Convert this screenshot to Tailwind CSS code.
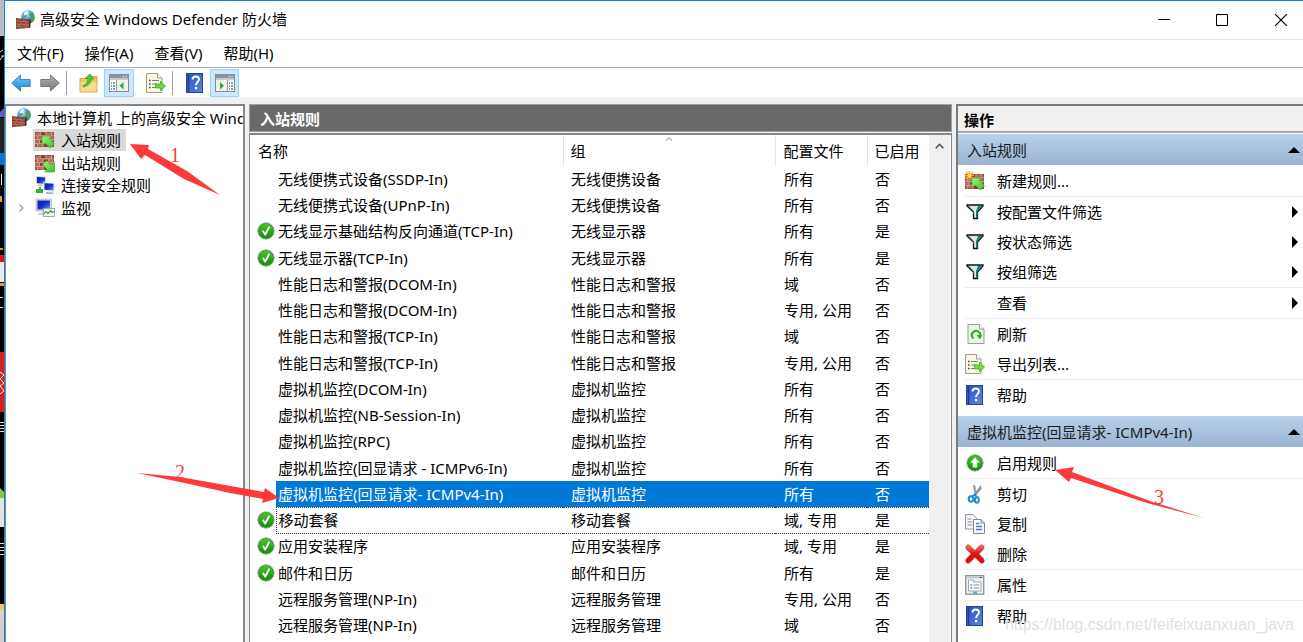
<!DOCTYPE html>
<html lang="zh-CN">
<head>
<meta charset="utf-8">
<meta name="viewport" content="width=device-width, initial-scale=1">
<title>高级安全 Windows Defender 防火墙</title>
<script src="https://cdn.jsdelivr.net/npm/@tailwindcss/browser@4"></script>
</head>
<body class="relative min-h-screen overflow-hidden bg-white font-['Noto_Sans','Noto_Sans_CJK_SC',sans-serif] text-[15px] leading-[22px] text-black">

<svg class="absolute size-0" aria-hidden="true">
  <defs>
    <linearGradient id="gGreen" x1="0" y1="0" x2="0" y2="1"><stop offset="0" stop-color="#4cc42e"/><stop offset="1" stop-color="#128a0c"/></linearGradient>
    <linearGradient id="gBlue" x1="0" y1="0" x2="0" y2="1"><stop offset="0" stop-color="#6fd0ff"/><stop offset="1" stop-color="#1682d8"/></linearGradient>
    <linearGradient id="gGray" x1="0" y1="0" x2="0" y2="1"><stop offset="0" stop-color="#b4b4b4"/><stop offset="1" stop-color="#767676"/></linearGradient>
    <linearGradient id="gBook" x1="0" y1="0" x2="1" y2="1"><stop offset="0" stop-color="#2c50b4"/><stop offset="1" stop-color="#5f86e4"/></linearGradient>
    <linearGradient id="gArrow" x1="0" y1="0" x2="1" y2="1"><stop offset="0" stop-color="#9cf47c"/><stop offset="1" stop-color="#3cc02a"/></linearGradient>
    <linearGradient id="gRed" x1="0" y1="0" x2="0" y2="1"><stop offset="0" stop-color="#f07a78"/><stop offset=".5" stop-color="#e01010"/><stop offset="1" stop-color="#d41414"/></linearGradient>
    <linearGradient id="gScreen" x1="0" y1="0" x2="1" y2="1"><stop offset="0" stop-color="#0a1a9c"/><stop offset=".5" stop-color="#1230d0"/><stop offset="1" stop-color="#6f9cff"/></linearGradient>
    <radialGradient id="gGlobe" cx=".4" cy=".3" r=".8"><stop offset="0" stop-color="#bfeaff"/><stop offset=".5" stop-color="#3f95dc"/><stop offset="1" stop-color="#1a4fa0"/></radialGradient>

    <symbol id="bricks" viewBox="0 0 20 16">
      <rect width="20" height="16" fill="#a04c3c"/>
      <path d="M1 1h4v2H1zM12 1h5v2h-5zM3 5h5v2H3zM15 5h4v2h-4zM0 9h4v2H0zM11 9h6v2h-6zM3 13h5v2H3z" fill="#c4705e"/>
      <path d="M6 1h5v2H6zM9 5h5v2H9zM5 9h5v2H5zM9 13h6v2H9z" fill="#883628"/>
      <path d="M0 4h20M0 8h20M0 12h20M5.500 0v4M11.500 0v4M17.500 0v4M2.500 4v4M8.500 4v4M14.500 4v4M4.500 8v4M10.500 8v4M17.500 8v4M2.500 12v4M8.500 12v4M15.500 12v4" stroke="#dcb4a8" stroke-width=".9" fill="none"/>
    </symbol>
    <symbol id="firewall" viewBox="0 0 20 20">
      <circle cx="13" cy="7" r="6.800" fill="url(#gGlobe)"/>
      <path d="M15 3l3 1 1.500 4-2 4-2-2 .5-3-2-2zM8 6l2-2 2 1-2 3z" fill="#46a836"/>
      <path d="M9 3c1-1.500 3-2 4.500-1.500L12 4.500l-3 1z" fill="#e0f8ff"/>
      <path d="M1 8l13 1.500V18L1 19z" fill="#8c3b2d"/>
      <path d="M1 11l13 1M1 14l13 .5M1 16.500l13-.5M4 8.500V11M9 9v2.500M6 11.500V14M11 12v2.500M4 14v2.500M9 14.500V16M6 16.500V19M11 16.500V18" stroke="#cc9484" stroke-width=".6" fill="none"/>
      <path d="M14 9.500l1.500-.8v8.500L14 18z" fill="#5b2119"/>
    </symbol>
    <symbol id="wall-in" viewBox="0 0 20 20">
      <use href="#bricks" x="0" y="2" width="19" height="15.200"/>
      <path d="M7 6h10l-2.600 2.600 5.100 5.200-4.200 4.200-5.200-5.100L7 15.500z" fill="url(#gArrow)" stroke="#3a9c2a" stroke-width=".6"/>
    </symbol>
    <symbol id="wall-out" viewBox="0 0 20 20">
      <use href="#bricks" x="0" y="2" width="19" height="15.200"/>
      <path d="M19.500 19h-10l2.600-2.600L7.500 11.700l4.200-4.200 4.700 4.600 3.100-2.600z" fill="url(#gArrow)" stroke="#3a9c2a" stroke-width=".6"/>
    </symbol>
    <symbol id="wall-new" viewBox="0 0 20 20">
      <use href="#bricks" x="0" y="3" width="19" height="15.200"/>
      <path d="M7 7h10l-2.600 2.600 5.100 5.200-4.200 4.200-5.200-5.100L7 16.500z" fill="url(#gArrow)" stroke="#3a9c2a" stroke-width=".6"/>
      <path d="M4.500 0v9M0 4.500h9M1 1l7 7M8 1L1 8" stroke="#f5a623" stroke-width="1.300"/><circle cx="4.500" cy="4.500" r="2" fill="#ffd75e"/>
    </symbol>
    <symbol id="computers" viewBox="0 0 20 20">
      <path d="M1 1l10 .5V10L1 9z" fill="#d5d9de"/><path d="M2 2l8 .5V9L2 8z" fill="url(#gScreen)"/>
      <path d="M8.500 7l11 .8V17l-11-1z" fill="#e3e6ea"/><path d="M9.500 8.200l9 .6V15.500l-9-.8z" fill="url(#gScreen)"/>
      <path d="M11 17l7 .5 1 1.500h-8z" fill="#a5abb1"/><path d="M1 14h3v-2h2v2h2v4H1z" fill="#36b32a"/><path d="M3 10.500h4" stroke="#b5bac0" stroke-width="1.500"/>
    </symbol>
    <symbol id="monitor" viewBox="0 0 20 20">
      <path d="M1 1h15.500v12H1z" fill="#d5d9de" stroke="#a6abb0" stroke-width=".6"/><path d="M2.500 2.500h12.500v9H2.500z" fill="url(#gScreen)"/>
      <path d="M4 15l9-1v3H3z" fill="#c0c5ca"/><rect x="8.500" y="10.500" width="11" height="8" fill="#f4faf4" stroke="#8b9b91" stroke-width=".8"/>
      <path d="M9 15.500l2-2 2 2 3-3 1 2 2-1" fill="none" stroke="#35a633" stroke-width="1.200"/>
    </symbol>
    <symbol id="check" viewBox="0 0 18 18">
      <circle cx="9" cy="9" r="8.200" fill="#128a0c" stroke="#9db59b" stroke-width="1"/><circle cx="9" cy="9" r="7.300" fill="url(#gGreen)"/>
      <path d="M5 9.300l1.500-1 1.700 2.400 3.400-6.400 1.600.8L8.800 13.500H7.600z" fill="#fff"/>
    </symbol>
    <symbol id="up" viewBox="0 0 18 18">
      <circle cx="9" cy="9" r="8.200" fill="#128a0c" stroke="#a9b8a8" stroke-width="1"/><circle cx="9" cy="9" r="7.300" fill="url(#gGreen)"/>
      <path d="M9 3.500l5 5h-2.700v5H6.700v-5H4z" fill="#fff"/>
    </symbol>
    <symbol id="help" viewBox="0 0 18 20">
      <rect x=".5" y=".5" width="16" height="19" fill="url(#gBook)" stroke="#26418f"/><path d="M2.500 1v18" stroke="#1d3a98" stroke-width="1.500"/>
      <path d="M6.500 6.500c0-4 6.500-4 6.500-.3 0 2.500-3 2.800-3 6" fill="none" stroke="#fff" stroke-width="1.900"/><rect x="9" y="14" width="2.200" height="2.200" fill="#fff"/>
    </symbol>
    <symbol id="funnel" viewBox="0 0 18 16">
      <path d="M1 1h16v1l-5.500 6v6.500h-4V8L1 2z" fill="#e4e7e7" stroke="#111" stroke-width="1.300"/>
      <path d="M12 2h4l-4.500 5v7H10V7z" fill="#118080"/><path d="M2.500 2l5 5.500v2" fill="none" stroke="#118080" stroke-width="1"/>
    </symbol>
    <symbol id="refresh" viewBox="0 0 18 20">
      <path d="M1 .5h11.500L17 5v14.500H1z" fill="#eef1ee" stroke="#9a9a9a"/><path d="M12.500.5V5H17" fill="#fff" stroke="#9a9a9a"/>
      <path d="M6.500 14.500c-4-4 0-8.500 3.500-7.500 3 .8 3.500 3 3 5" fill="none" stroke="#38b026" stroke-width="2.200"/><path d="M9.500 11h6L13 15.500z" fill="#38b026"/>
    </symbol>
    <symbol id="export" viewBox="0 0 20 20">
      <path d="M.5.500h11L16 5v14.500H.5z" fill="#fbf8e2" stroke="#a29e8c"/><path d="M11.500.5V5H16" fill="#fff" stroke="#a29e8c"/>
      <path d="M3 7.500h1.500M3 11h1.500M3 14.500h1.500" stroke="#444" stroke-width="1.300"/><path d="M6 7.500h7M6 11h5M6 14.500h4" stroke="#777c90" stroke-width="1.200"/>
      <path d="M9.500 11h5V8l5 5-5 5v-3h-5z" fill="#6ddb3e" stroke="#3b9d24" stroke-width=".7"/>
    </symbol>
    <symbol id="scissors" viewBox="0 0 20 20">
      <path d="M8 1l1.500 9 1.500 2-.5-10zM16 1L8 11l2 1.500L16.500 5z" fill="#8796a3"/>
      <ellipse cx="6" cy="15" rx="2.300" ry="2.700" fill="none" stroke="#168ed8" stroke-width="2"/><ellipse cx="11.800" cy="16" rx="2" ry="2.700" fill="none" stroke="#168ed8" stroke-width="2"/>
      <path d="M7 12.500l3-2 2 3" fill="none" stroke="#168ed8" stroke-width="1.800"/>
    </symbol>
    <symbol id="copy" viewBox="0 0 20 20">
      <path d="M.5.500H8l3.500 3.500v11H.5z" fill="#f6f6f6" stroke="#999"/><path d="M2.500 5h4M2.500 8h5M2.500 11h5" stroke="#7694bb" stroke-width="1.200"/>
      <path d="M8.500 5.500H16L19.500 9v10.500h-11z" fill="#f8f8f8" stroke="#888"/><path d="M16 5.500V9h3.500" fill="none" stroke="#888"/><path d="M11 9.500h3.500M11 12.500h6M11 15.500h6" stroke="#4f80bd" stroke-width="1.300"/>
    </symbol>
    <symbol id="delete" viewBox="0 0 20 20">
      <path d="M3 .7C5 .5 7 4 10 6.500 13 3 15 .5 17 .8c1.500.2 2.500 2 2 3.500-.5 1.500-3.500 3.700-5 5.700 1.500 2 4.500 4 5.300 6 .4 1.500-1 3.500-2.500 3.300-2-.3-4.500-4-6.800-5.800-2.500 2-4.500 5.500-6.700 5.800C1.500 19.500.3 17.500.7 16c.5-1.500 4-4.500 5.300-6C4.500 8 1.500 6 .8 4.200.5 2.500 1.500.8 3 .7z" fill="url(#gRed)" stroke="#b33" stroke-width=".5"/>
    </symbol>
    <symbol id="properties" viewBox="0 0 20 20">
      <rect x=".7" y=".7" width="18" height="18.500" fill="#eef1f4" stroke="#8b8f94" stroke-width="1.300"/><path d="M2 2.500h15" stroke="#c2c8ce" stroke-width="1.500"/><path d="M14.500 2.500h2.500" stroke="#555"/>
      <path d="M3.500 7V5h5v2h7.500v9H3.500z" fill="#fff" stroke="#a3a8ad"/><path d="M5.500 10h1.500M5.500 13h1.500" stroke="#1a90d8" stroke-width="1.300"/><path d="M8.500 10h6M8.500 13h6" stroke="#858b92" stroke-width="1.200"/><path d="M8 17.500h4" stroke="#31b6e8" stroke-width="2"/>
    </symbol>
    <symbol id="back" viewBox="0 0 20 18"><path d="M.7 9L9.500 1v4.500h9.700v7H9.500V17z" fill="url(#gBlue)" stroke="#4d87ad"/></symbol>
    <symbol id="forward" viewBox="0 0 20 18"><path d="M19.300 9L10.500 1v4.500H.8v7h9.700V17z" fill="url(#gGray)" stroke="#777"/></symbol>
    <symbol id="folder" viewBox="0 0 20 20">
      <path d="M1 5.500h9l1.500-2H18V19H1z" fill="#e9c765" stroke="#c09a3c" stroke-width=".8"/><path d="M1.500 9h16v9.500h-16z" fill="#f4dc8c"/>
      <path d="M4 12.500C8 11 9 8 8.500 5.500H6L11 1l4 5h-2.800c.3 3.500-2.700 7-8.200 8z" fill="#4cc531" stroke="#2f9120" stroke-width=".6"/>
    </symbol>
    <symbol id="pane-left" viewBox="0 0 20 18">
      <rect x=".5" y=".5" width="19" height="17" fill="#fff" stroke="#858c96"/><path d="M1 1h18v3.500H1z" fill="#8d95a3"/><path d="M14 2.500h1M16.500 2.500h1" stroke="#fff" stroke-width="1.200"/><path d="M1 5.500h18" stroke="#c5cad2" stroke-width="1.500"/>
      <path d="M7.500 6v11.500" stroke="#8d95a3"/><path d="M2 9h1M4 9h2M2 12h1M4 12h2M2 15h1M4 15h2" stroke="#55759f" stroke-width="1.300"/><rect x="8" y="6.500" width="11" height="10.500" fill="#edf2ec"/><path d="M14.500 8v7.500L10.500 11.700z" fill="#30a928"/>
    </symbol>
    <symbol id="pane-right" viewBox="0 0 20 18">
      <rect x=".5" y=".5" width="19" height="17" fill="#fff" stroke="#858c96"/><path d="M1 1h18v3.500H1z" fill="#8d95a3"/><path d="M14 2.500h1M16.500 2.500h1" stroke="#fff" stroke-width="1.200"/><path d="M1 5.500h18" stroke="#c5cad2" stroke-width="1.500"/>
      <rect x="1" y="6.500" width="11" height="10.500" fill="#edf2ec"/><path d="M12.500 6v11.500" stroke="#8d95a3"/><path d="M14 9h1M16 9h2M14 12h1M16 12h2M14 15h1M16 15h2" stroke="#55759f" stroke-width="1.300"/><path d="M5 8v7.500L9 11.700z" fill="#30a928"/>
    </symbol>
    <symbol id="tri-up" viewBox="0 0 12 6"><path d="M6 0l6 6H0z"/></symbol>
    <symbol id="tri-right" viewBox="0 0 6 12"><path d="M0 0l6 6-6 6z"/></symbol>
  </defs>
</svg>

<div class="flex min-h-screen">
  <svg class="w-1 shrink-0 self-stretch bg-black" viewBox="0 0 4 642" preserveAspectRatio="none" height="642" aria-hidden="true">
    <path d="M0 0h4v36H0z" fill="#b9bcc0"/><path d="M0 52l3-2M1 56h3M0 60l3-4" stroke="#ddd"/><path d="M0 112l4-4v9H0z" fill="#5a62c0"/><path d="M0 118h4v35H0z" fill="#222"/><path d="M0 153h4v12H0z" fill="#0b6fd8"/>
    <path d="M1.500 174v11" stroke="#eee"/><path d="M0 196h2v6H0z" fill="#d8a040"/><path d="M0 248h3v2H0z" fill="#e0a010"/><path d="M0 255h4v7H0z" fill="#d81818"/><path d="M0 262h4v20H0z" fill="#e8e8e8"/><path d="M0 283h4v3H0z" fill="#e0a010"/>
    <path d="M0 297.500h3M0 307.500h3" stroke="#ddd"/><path d="M0 352h4v60H0z" fill="#d8201c"/><path d="M0 372l4 3-4 4 4 4-4 3 4 5-4 3" fill="none" stroke="#eee"/>
    <path d="M0 422.500h4M0 425.500h4M0 428.500h4M0 431.500h4M0 543.500h4M0 547.500h4M0 550.500h4M0 554.500h4" stroke="#ddd"/><path d="M0 488l4 4v6H0z" fill="#7bcf45"/><path d="M0 498h4v29H0z" fill="#e3e3e3"/><path d="M0 604h4v6H0z" fill="#e8c868"/><path d="M0 610h4v32H0z" fill="#d8d0d0"/>
  </svg>

  <div class="flex min-w-0 flex-1 flex-col border-t border-l border-[#1a7fd4] bg-[#f0f0f0]">
    <header class="flex h-[39px] shrink-0 items-center border-b border-[#e5e5e5] bg-white pl-[10px]">
      <svg class="size-5"><use href="#firewall"/></svg>
      <h1 class="ml-[5px] flex-1 pb-0.5">高级安全 Windows Defender 防火墙</h1>
      <button class="flex h-9 w-[59px] items-center justify-center" aria-label="最小化"><svg class="h-3 w-3" viewBox="0 0 12 12"><path d="M0 5.500h12" stroke="#000"/></svg></button>
      <button class="flex h-9 w-[58px] items-center justify-center" aria-label="最大化"><svg class="h-3 w-3" viewBox="0 0 12 12"><path d="M.5.500h11v11H.5z" fill="none" stroke="#000"/></svg></button>
      <button class="flex h-9 w-[52px] items-center justify-center" aria-label="关闭"><svg class="ml-2 h-3 w-3" viewBox="0 0 12 12"><path d="M0 0l12 12M12 0L0 12" stroke="#000" stroke-width="1.200"/></svg></button>
    </header>

    <nav class="flex h-7 shrink-0 items-center gap-[21px] border-b border-[#a6adb5] bg-white pb-0.5 pl-3" aria-label="菜单">
      <button>文件(F)</button>
      <button>操作(A)</button>
      <button>查看(V)</button>
      <button>帮助(H)</button>
    </nav>

    <div class="flex h-[29px] shrink-0 items-center bg-white pl-1.5" role="toolbar" aria-label="工具栏">
      <button class="pr-0.5" aria-label="后退"><svg class="h-[18px] w-5"><use href="#back"/></svg></button>
      <button class="ml-[6px] px-px" aria-label="前进"><svg class="h-[18px] w-5"><use href="#forward"/></svg></button>
      <span class="ml-[5px] h-6 w-px bg-[#a0a0a0]"></span>
      <button class="ml-3" aria-label="上一级"><svg class="size-5"><use href="#folder"/></svg></button>
      <button class="ml-[5px] flex h-[28px] w-[30px] items-center justify-center border border-[#99d1ff] bg-[#cce8ff]" aria-label="显示控制台树"><svg class="h-[18px] w-5"><use href="#pane-left"/></svg></button>
      <button class="ml-3" aria-label="导出列表"><svg class="size-5"><use href="#export"/></svg></button>
      <span class="ml-[6px] h-6 w-px bg-[#a0a0a0]"></span>
      <button class="ml-[13px]" aria-label="帮助"><svg class="h-5 w-[18px]"><use href="#help"/></svg></button>
      <button class="ml-1.5 flex h-[28px] w-[29px] items-center justify-center border border-[#99d1ff] bg-[#cce8ff]" aria-label="显示操作窗格"><svg class="h-[18px] w-5"><use href="#pane-right"/></svg></button>
    </div>

    <main class="flex min-h-0 flex-1 pt-[7px]">
      <aside class="w-60 shrink-0 overflow-hidden border-t-2 border-r-2 border-l border-[#828790] bg-white whitespace-nowrap">
        <ul>
          <li class="flex h-[23px] items-center pl-[5px]"><svg class="size-5 shrink-0"><use href="#firewall"/></svg><button class="ml-1.5">本地计算机 上的高级安全 Windows Defender 防火墙</button></li>
          <li class="flex h-[22px] items-center pl-[27px]"><button class="flex items-center bg-[#d9d9d9] pr-[5px] pl-[2px]"><svg class="mr-[6px] size-5"><use href="#wall-in"/></svg>入站规则</button></li>
          <li class="flex h-[23px] items-center pl-[27px]"><button class="flex items-center pl-[2px]"><svg class="mr-[6px] size-5"><use href="#wall-out"/></svg>出站规则</button></li>
          <li class="flex h-[22px] items-center pl-[27px]"><button class="flex items-center pl-[2px]"><svg class="mr-[6px] size-5"><use href="#computers"/></svg>连接安全规则</button></li>
          <li class="flex h-[23px] items-center pl-[13px]"><svg class="mr-[9px] h-2 w-[5px]" viewBox="0 0 5 8"><path d="M.5.500L4 4 .5 7.500" fill="none" stroke="#999" stroke-width="1.200"/></svg><button class="flex items-center pl-[2px]"><svg class="mr-[6px] size-5"><use href="#monitor"/></svg>监视</button></li>
        </ul>
      </aside>

      <section class="ml-1 flex min-w-0 flex-1 flex-col">
        <h2 class="h-7 shrink-0 border border-[#a0a0a0] bg-[#696969] pt-[3px] pl-[10px] font-bold text-white">入站规则</h2>
        <div class="mt-px flex flex-1 border-x border-t-2 border-[#828790] bg-white">
          <table class="min-w-0 flex-1 table-fixed border-collapse self-start text-left whitespace-nowrap [&_tbody_td]:h-[26px] [&_tbody_td]:p-0 [&_tbody_tr:nth-child(4n)>td]:h-[27px] [&_td:nth-child(2)]:pl-[2px] [&_td:nth-child(3)]:pl-2 [&_td:nth-child(4)]:pl-[9px] [&_td:nth-child(5)]:pl-2">
            <colgroup><col class="w-[26px]"><col><col class="w-[212px]"><col class="w-[92px]"><col class="w-[62px]"></colgroup>
            <thead>
              <tr class="h-[31px]">
                <th colspan="2" class="border-r border-[#e5e5e5] p-0 pl-2 font-normal">名称</th>
                <th class="relative border-r border-[#e5e5e5] p-0 pl-[7px] font-normal">组<svg class="absolute top-0.5 left-1/2 h-1 w-2 -translate-x-1/2" viewBox="0 0 8 4"><path d="M.5 4L4 .7 7.500 4" fill="none" stroke="#888"/></svg></th>
                <th class="border-r border-[#e5e5e5] p-0 pl-2 font-normal">配置文件</th>
                <th class="p-0 pl-[7px] font-normal">已启用</th>
              </tr>
            </thead>
            <tbody>
              <tr><td></td><td>无线便携式设备(SSDP-In)</td><td>无线便携设备</td><td>所有</td><td>否</td></tr>
              <tr><td></td><td>无线便携式设备(UPnP-In)</td><td>无线便携设备</td><td>所有</td><td>否</td></tr>
              <tr><td><svg class="ml-[7px] size-[18px]"><use href="#check"/></svg></td><td>无线显示基础结构反向通道(TCP-In)</td><td>无线显示器</td><td>所有</td><td>是</td></tr>
              <tr><td><svg class="ml-[7px] size-[18px]"><use href="#check"/></svg></td><td>无线显示器(TCP-In)</td><td>无线显示器</td><td>所有</td><td>是</td></tr>
              <tr><td></td><td>性能日志和警报(DCOM-In)</td><td>性能日志和警报</td><td>域</td><td>否</td></tr>
              <tr><td></td><td>性能日志和警报(DCOM-In)</td><td>性能日志和警报</td><td>专用, 公用</td><td>否</td></tr>
              <tr><td></td><td>性能日志和警报(TCP-In)</td><td>性能日志和警报</td><td>域</td><td>否</td></tr>
              <tr><td></td><td>性能日志和警报(TCP-In)</td><td>性能日志和警报</td><td>专用, 公用</td><td>否</td></tr>
              <tr><td></td><td>虚拟机监控(DCOM-In)</td><td>虚拟机监控</td><td>所有</td><td>否</td></tr>
              <tr><td></td><td>虚拟机监控(NB-Session-In)</td><td>虚拟机监控</td><td>所有</td><td>否</td></tr>
              <tr><td></td><td>虚拟机监控(RPC)</td><td>虚拟机监控</td><td>所有</td><td>否</td></tr>
              <tr><td></td><td>虚拟机监控(回显请求 - ICMPv6-In)</td><td>虚拟机监控</td><td>所有</td><td>否</td></tr>
              <tr class="text-white [&>td:not(:first-child)]:bg-[#0078d7]" aria-selected="true"><td></td><td>虚拟机监控(回显请求- ICMPv4-In)</td><td>虚拟机监控</td><td>所有</td><td>否</td></tr>
              <tr class="[&>td:not(:first-child)]:border-y [&>td:not(:first-child)]:border-dotted [&>td:not(:first-child)]:border-[#333]"><td><svg class="ml-[7px] size-[18px]"><use href="#check"/></svg></td><td class="border-l">移动套餐</td><td>移动套餐</td><td>域, 专用</td><td>是</td></tr>
              <tr><td><svg class="ml-[7px] size-[18px]"><use href="#check"/></svg></td><td>应用安装程序</td><td>应用安装程序</td><td>域, 专用</td><td>是</td></tr>
              <tr><td><svg class="ml-[7px] size-[18px]"><use href="#check"/></svg></td><td>邮件和日历</td><td>邮件和日历</td><td>所有</td><td>是</td></tr>
              <tr><td></td><td>远程服务管理(NP-In)</td><td>远程服务管理</td><td>专用, 公用</td><td>否</td></tr>
              <tr><td></td><td>远程服务管理(NP-In)</td><td>远程服务管理</td><td>域</td><td>否</td></tr>
            </tbody>
          </table>
          <div class="mr-px w-[21px] shrink-0 bg-[#f0f0f0] pt-2">
            <button class="flex w-full justify-center" aria-label="向上滚动"><svg class="h-[6px] w-[9px]" viewBox="0 0 9 6"><path d="M.7 5.300l3.800-4 3.800 4" fill="none" stroke="#505050" stroke-width="1.600"/></svg></button>
          </div>
        </div>
      </section>

      <aside class="ml-1 flex w-[347px] shrink-0 flex-col border-t-2 border-l-2 border-[#7a7a7a] bg-white">
        <h2 class="h-[27px] shrink-0 border-b-2 border-[#a8a8a8] bg-[#f0f0f0] pt-[3px] pl-1.5 font-bold">操作</h2>
        <button class="mt-px flex h-[31px] shrink-0 items-center justify-between bg-linear-to-b from-[#b9d1ea] to-[#99b4d1] pr-[3px] pl-[9px] text-[#1a1a1a]">入站规则<svg class="h-1.5 w-3"><use href="#tri-up"/></svg></button>
        <ul class="mt-px divide-y divide-[#ececec] pl-[7px] [&_button]:flex [&_button]:h-[30px] [&_button]:w-full [&_button]:items-center [&_button]:text-left [&_button>span]:flex [&_button>span]:w-8 [&_button>span]:shrink-0">
          <li><button><span><svg class="size-5"><use href="#wall-new"/></svg></span>新建规则...</button></li>
          <li>
            <button><span><svg class="ml-px h-4 w-[18px]"><use href="#funnel"/></svg></span>按配置文件筛选<svg class="mr-[5px] ml-auto h-3 w-1.5"><use href="#tri-right"/></svg></button>
            <button><span><svg class="ml-px h-4 w-[18px]"><use href="#funnel"/></svg></span>按状态筛选<svg class="mr-[5px] ml-auto h-3 w-1.5"><use href="#tri-right"/></svg></button>
            <button><span><svg class="ml-px h-4 w-[18px]"><use href="#funnel"/></svg></span>按组筛选<svg class="mr-[5px] ml-auto h-3 w-1.5"><use href="#tri-right"/></svg></button>
          </li>
          <li><button><span></span>查看<svg class="mr-[5px] ml-auto h-3 w-1.5"><use href="#tri-right"/></svg></button></li>
          <li>
            <button><span><svg class="ml-0.5 h-5 w-[18px]"><use href="#refresh"/></svg></span>刷新</button>
            <button><span><svg class="size-5"><use href="#export"/></svg></span>导出列表...</button>
          </li>
          <li><button><span><svg class="ml-px h-5 w-[18px]"><use href="#help"/></svg></span>帮助</button></li>
        </ul>
        <button class="mt-1.5 flex h-[31px] shrink-0 items-center justify-between bg-linear-to-b from-[#b9d1ea] to-[#99b4d1] pr-[3px] pl-[9px] text-[#1a1a1a]">虚拟机监控(回显请求- ICMPv4-In)<svg class="h-1.5 w-3"><use href="#tri-up"/></svg></button>
        <ul class="mt-px divide-y divide-[#ececec] pl-[7px] [&_button]:flex [&_button]:h-[30px] [&_button]:w-full [&_button]:items-center [&_button]:text-left [&_button>span]:flex [&_button>span]:w-8 [&_button>span]:shrink-0">
          <li><button><span><svg class="ml-px size-[18px]"><use href="#up"/></svg></span>启用规则</button></li>
          <li>
            <button><span><svg class="size-5"><use href="#scissors"/></svg></span>剪切</button>
            <button><span><svg class="size-5"><use href="#copy"/></svg></span>复制</button>
            <button><span><svg class="size-5"><use href="#delete"/></svg></span>删除</button>
          </li>
          <li><button><span><svg class="size-5"><use href="#properties"/></svg></span>属性</button></li>
          <li><button><span><svg class="ml-px h-5 w-[18px]"><use href="#help"/></svg></span>帮助</button></li>
        </ul>
      </aside>
    </main>
  </div>
</div>

<svg class="pointer-events-none absolute top-0 left-0 h-[642px] w-[1303px] font-['Liberation_Serif',serif] text-xl" viewBox="0 0 1303 642" fill="#fb3b3b">
  <path d="M130 144l19 1-1 4 39 22 33 24-36-16-39-24-4 4z"/>
  <path d="M137 473l43 4 84 15 1-4 14 10-17 5 1-4-33-6-50-11z"/>
  <path d="M1055 470l19-3-2 5 78 29 54 17-57-15-76-25-2 4z"/>
  <text x="170" y="162">1</text>
  <text x="175" y="479">2</text>
  <text x="1154" y="504">3</text>
</svg>
<p class="pointer-events-none absolute right-[9px] bottom-[5px] font-['Liberation_Sans',sans-serif] text-base text-[#dcdcdc]/90">https://blog.csdn.net/feifeixuanxuan_java</p>
</body>
</html>
